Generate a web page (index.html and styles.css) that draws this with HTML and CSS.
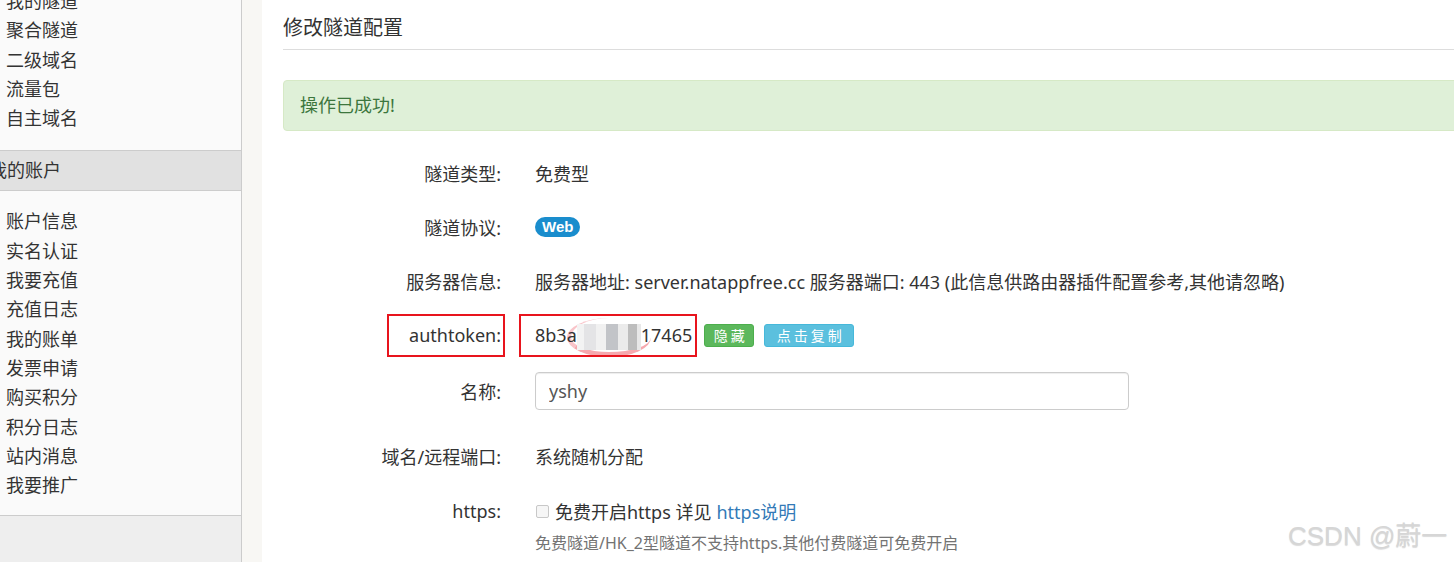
FILE: index.html
```html
<!DOCTYPE html>
<html lang="zh-CN">
<head>
    <meta charset="UTF-8">
    <title>修改隧道配置</title>
    <link rel="stylesheet" href="styles.css">
</head>
<body>
<div class="page">
    <aside class="sidebar">
        <div class="panel">
            <ul class="nav-list nav-list--top">
                <li>我的隧道</li>
                <li>聚合隧道</li>
                <li>二级域名</li>
                <li>流量包</li>
                <li>自主域名</li>
            </ul>
            <div class="nav-header"><span>我的账户</span></div>
            <ul class="nav-list">
                <li>账户信息</li>
                <li>实名认证</li>
                <li>我要充值</li>
                <li>充值日志</li>
                <li>我的账单</li>
                <li>发票申请</li>
                <li>购买积分</li>
                <li>积分日志</li>
                <li>站内消息</li>
                <li>我要推广</li>
            </ul>
        </div>
    </aside>
    <div class="gutter"></div>
    <main class="content">
        <h3 class="page-header">修改隧道配置</h3>
        <div class="alert">操作已成功!</div>
        <form class="form">
            <div class="form-row form-row--first">
                <label>隧道类型:</label>
                <div class="value">免费型</div>
            </div>
            <div class="form-row">
                <label>隧道协议:</label>
                <div class="value"><span class="badge">Web</span></div>
            </div>
            <div class="form-row">
                <label>服务器信息:</label>
                <div class="value">服务器地址: server.natappfree.cc 服务器端口: 443 (此信息供路由器插件配置参考,其他请忽略)</div>
            </div>
            <div class="form-row">
                <label><span class="mark mark--label">authtoken:</span></label>
                <div class="value">
                    <span class="mark mark--token">8b3a<span class="mosaic"></span>17465</span>
                    <button type="button" class="btn btn--green">隐藏</button>
                    <button type="button" class="btn btn--blue">点击复制</button>
                </div>
            </div>
            <div class="form-row form-row--name">
                <label>名称:</label>
                <div class="value"><input class="input" type="text" value="yshy"></div>
            </div>
            <div class="form-row form-row--domain">
                <label>域名/远程端口:</label>
                <div class="value">系统随机分配</div>
            </div>
            <div class="form-row form-row--https">
                <label>https:</label>
                <div class="value">
                    <input type="checkbox" class="check"> 免费开启https 详见 <a href="#" class="link">https说明</a>
                </div>
            </div>
            <div class="form-row form-row--help">
                <span></span>
                <div class="help">免费隧道/HK_2型隧道不支持https.其他付费隧道可免费开启</div>
            </div>
        </form>
    </main>
</div>
<div class="watermark">CSDN @蔚一</div>
</body>
</html>
```

FILE: styles.css
```css
html, body {
    margin: 0;
    padding: 0;
}
body {
    font-family: "Noto Sans", "Noto Sans CJK SC", sans-serif;
    font-size: 18px;
    color: #333;
    background: #fff;
    width: 1454px;
    height: 562px;
    overflow: hidden;
    position: relative;
}
.page {
    display: flex;
    height: 562px;
}

/* Sidebar */
.sidebar {
    flex: 0 0 241px;
    background: #eee;
    border-right: 1px solid #ccc;
}
.panel {
    background: #fafafa;
    border-bottom: 1px solid #ccc;
}
.nav-list {
    list-style: none;
    margin: 0;
    padding: 16px 0 15px;
}
.nav-list--top {
    margin-top: -13px;
    padding-top: 0;
    padding-bottom: 17px;
}
.nav-list li {
    line-height: 29.3px;
    padding-left: 6px;
    white-space: nowrap;
}
.nav-header {
    background: #e1e1e1;
    border-top: 1px solid #ccc;
    border-bottom: 1px solid #ccc;
    line-height: 39px;
    height: 39px;
    overflow: hidden;
}
.nav-header span {
    margin-left: -11px;
}
.gutter {
    flex: 0 0 20px;
    background: #f8f7f4;
}

/* Main */
.content {
    flex: 0 0 1250px;
    padding-left: 21px;
}
.page-header {
    margin: 0;
    padding: 16px 0 9px;
    font-size: 20px;
    font-weight: normal;
    line-height: 24px;
    border-bottom: 1px solid #ddd;
}
.alert {
    margin-top: 30px;
    padding: 15px 16px;
    line-height: 19px;
    color: #3c763d;
    background: #dff0d8;
    border: 1px solid #d6e9c6;
    border-radius: 4px;
}
.form {
    margin-top: 14px;
}
.form-row {
    display: grid;
    grid-template-columns: 218px 1fr;
    column-gap: 34px;
    align-items: center;
    height: 54px;
}
.form-row--first {
    height: 55px;
}
.form-row--name {
    height: 58px;
}
.form-row--domain {
    height: 72px;
}
.form-row--https {
    height: 38px;
}
.form-row--help {
    height: 24px;
}
.form-row label {
    text-align: right;
    white-space: nowrap;
}
.value {
    white-space: nowrap;
    display: flex;
    align-items: center;
}
.badge {
    display: inline-block;
    background: #1a8dcd;
    color: #fff;
    font-family: "Liberation Sans", sans-serif;
    font-weight: bold;
    font-size: 15px;
    line-height: 20px;
    height: 20px;
    padding: 0 7px;
    border-radius: 10px;
}

/* highlighted boxes */
.mark {
    display: inline-block;
    border: 2px solid #e8141d;
    height: 39px;
    line-height: 39px;
}
.mark--label {
    padding: 0 2px 0 20px;
    margin-right: -4px;
}
.mark--token {
    position: relative;
    margin-left: -16px;
    padding: 0 3px 0 14px;
}
.mosaic {
    display: inline-block;
    position: relative;
    width: 64px;
    height: 26px;
    vertical-align: middle;
    background: linear-gradient(90deg, #f3f3f3 0, #f3f3f3 7px, #e4e4e6 7px, #e4e4e6 19px, #f1f1f1 19px, #f1f1f1 29px, #c2c4c8 29px, #c2c4c8 41px, #ebebeb 41px, #ebebeb 51px, #bdbdbd 51px, #bdbdbd 60px, #e8e8e8 60px);
}
.mosaic::before {
    content: '';
    position: absolute;
    left: -10px;
    top: -6px;
    width: 80px;
    height: 34px;
    border-radius: 50%;
    border-bottom: 5px solid rgba(240, 110, 120, 0.6);
    border-left: 4px solid rgba(240, 110, 120, 0.4);
    z-index: -1;
}
.btn {
    border: 1px solid transparent;
    border-radius: 3px;
    color: #fff;
    font-family: inherit;
    font-size: 14px;
    line-height: 21px;
    height: 23px;
    padding: 0 0 0 3px;
    letter-spacing: 3px;
    cursor: pointer;
}
.btn--green {
    width: 50px;
    margin-left: 7px;
    background: #5cb85c;
    border-color: #4cae4c;
}
.btn--blue {
    width: 90px;
    margin-left: 10px;
    background: #5bc0de;
    border-color: #46b8da;
}
.input {
    width: 594px;
    height: 38px;
    box-sizing: border-box;
    border: 1px solid #ccc;
    border-radius: 4px;
    padding: 0 13px;
    font-family: inherit;
    font-size: 18px;
    color: #555;
    box-shadow: inset 0 1px 1px rgba(0, 0, 0, .075);
}
.check {
    appearance: none;
    width: 13px;
    height: 13px;
    margin: 0 6px 0 1px;
    border: 1px solid #c8c8c8;
    border-radius: 2px;
    background: #f6f6f6;
}
.link {
    color: #337ab7;
    text-decoration: none;
    margin-left: 5px;
}
.help {
    font-size: 16px;
    color: #737373;
    white-space: nowrap;
}
.watermark {
    position: absolute;
    left: 1288px;
    top: 519px;
    font-family: "Liberation Sans", "Noto Sans CJK SC", sans-serif;
    font-size: 26px;
    line-height: 34px;
    color: #d6d6d6;
    text-shadow: 0 1px 1px rgba(0, 0, 0, .15);
}
```
